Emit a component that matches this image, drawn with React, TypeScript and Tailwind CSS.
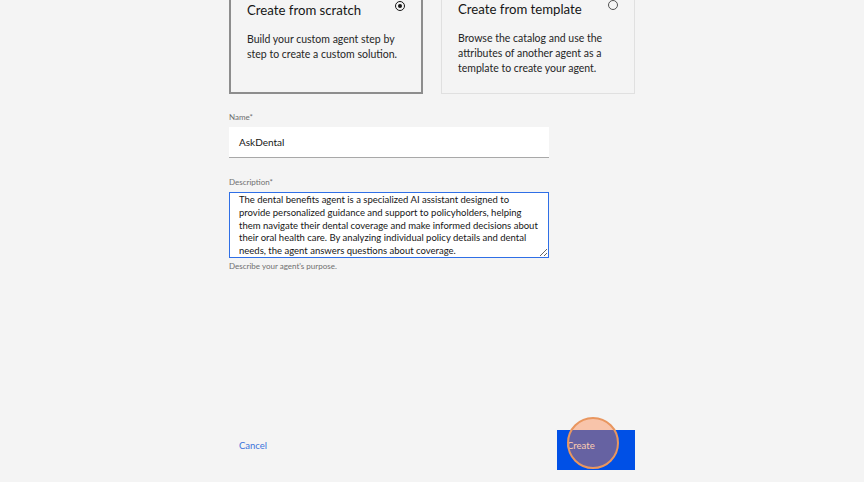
import React from "react";

const font = { fontFamily: 'Lato, "Noto Sans", sans-serif' };

type OptionCardProps = {
  title: string;
  body: string;
  selected?: boolean;
};

function OptionCard({ title, body, selected }: OptionCardProps) {
  return (
    <div
      className={`flex flex-col px-4 pt-4 pb-[17px] bg-[#f4f4f4] ${
        selected ? "border-2 border-[#8d8d8d]" : "border border-[#e0e0e0]"
      }`}
    >
      <div className="flex items-start justify-between">
        <span className="text-[13.2px] leading-[20px] text-[#161616]">{title}</span>
        {/* radio */}
        <span
          className={`mt-[1px] flex h-[10px] w-[10px] items-center justify-center rounded-full border ${
            selected ? "border-[#161616]" : "border-[#525252]"
          }`}
        >
          {selected && <span className="h-[4px] w-[4px] rounded-full bg-[#161616]" />}
        </span>
      </div>
      <p className="mt-3 text-[10.5px] leading-[15px] text-[#262626]">{body}</p>
    </div>
  );
}

export default function App() {
  return (
    <div className="flex h-screen w-full flex-col overflow-hidden bg-[#f4f4f4]" style={font}>
      <div className="mx-auto flex h-full w-[406px] flex-col">
        {/* option cards, top edge scrolled off */}
        <div className="-mt-[18px] grid grid-cols-2 gap-[18px]">
          <OptionCard
            selected
            title="Create from scratch"
            body="Build your custom agent step by step to create a custom solution."
          />
          <OptionCard
            title="Create from template"
            body="Browse the catalog and use the attributes of another agent as a template to create your agent."
          />
        </div>

        {/* Name */}
        <div className="mt-[18px] w-[320px]">
          <label className="block text-[8px] leading-[10px] text-[#6f6f6f]">Name*</label>
          <div className="mt-[5px] flex h-[31px] items-center border-b border-[#a8a8a8] bg-white px-[10px] text-[10px] text-[#161616]">
            AskDental
          </div>
        </div>

        {/* Description */}
        <div className="mt-[19px] w-[320px]">
          <label className="block text-[8px] leading-[10px] text-[#6f6f6f]">Description*</label>
          <textarea
            readOnly
            className="mt-[5px] block h-[66px] w-[320px] resize-y overflow-hidden border-[1.5px] border-[#2f6fe6] bg-white px-[9px] pt-[1px] text-[9.5px] leading-[12.8px] text-[#161616] outline-none"
            defaultValue="The dental benefits agent is a specialized AI assistant designed to provide personalized guidance and support to policyholders, helping them navigate their dental coverage and make informed decisions about their oral health care. By analyzing individual policy details and dental needs, the agent answers questions about coverage."
          />
          <p className="mt-[3px] text-[8px] leading-[10px] text-[#6f6f6f]">Describe your agent's purpose.</p>
        </div>

        {/* footer */}
        <div className="mt-auto mb-3 flex items-center justify-between">
          <button className="flex h-10 items-start px-[10px] pt-[10px] text-[9.5px] leading-[12px] text-[#3b73db]">
            Cancel
          </button>
          <div className="relative">
            <button className="flex h-10 w-[78px] items-start bg-[#0050e6] px-[10px] pt-[10px] text-[9.5px] leading-[12px] text-white">
              Create
            </button>
            {/* click highlight */}
            <span className="pointer-events-none absolute left-[10px] top-[-13px] h-[52px] w-[52px] rounded-full border-2 border-[#e9965f] bg-[rgba(255,125,60,0.4)]" />
          </div>
        </div>
      </div>
    </div>
  );
}
